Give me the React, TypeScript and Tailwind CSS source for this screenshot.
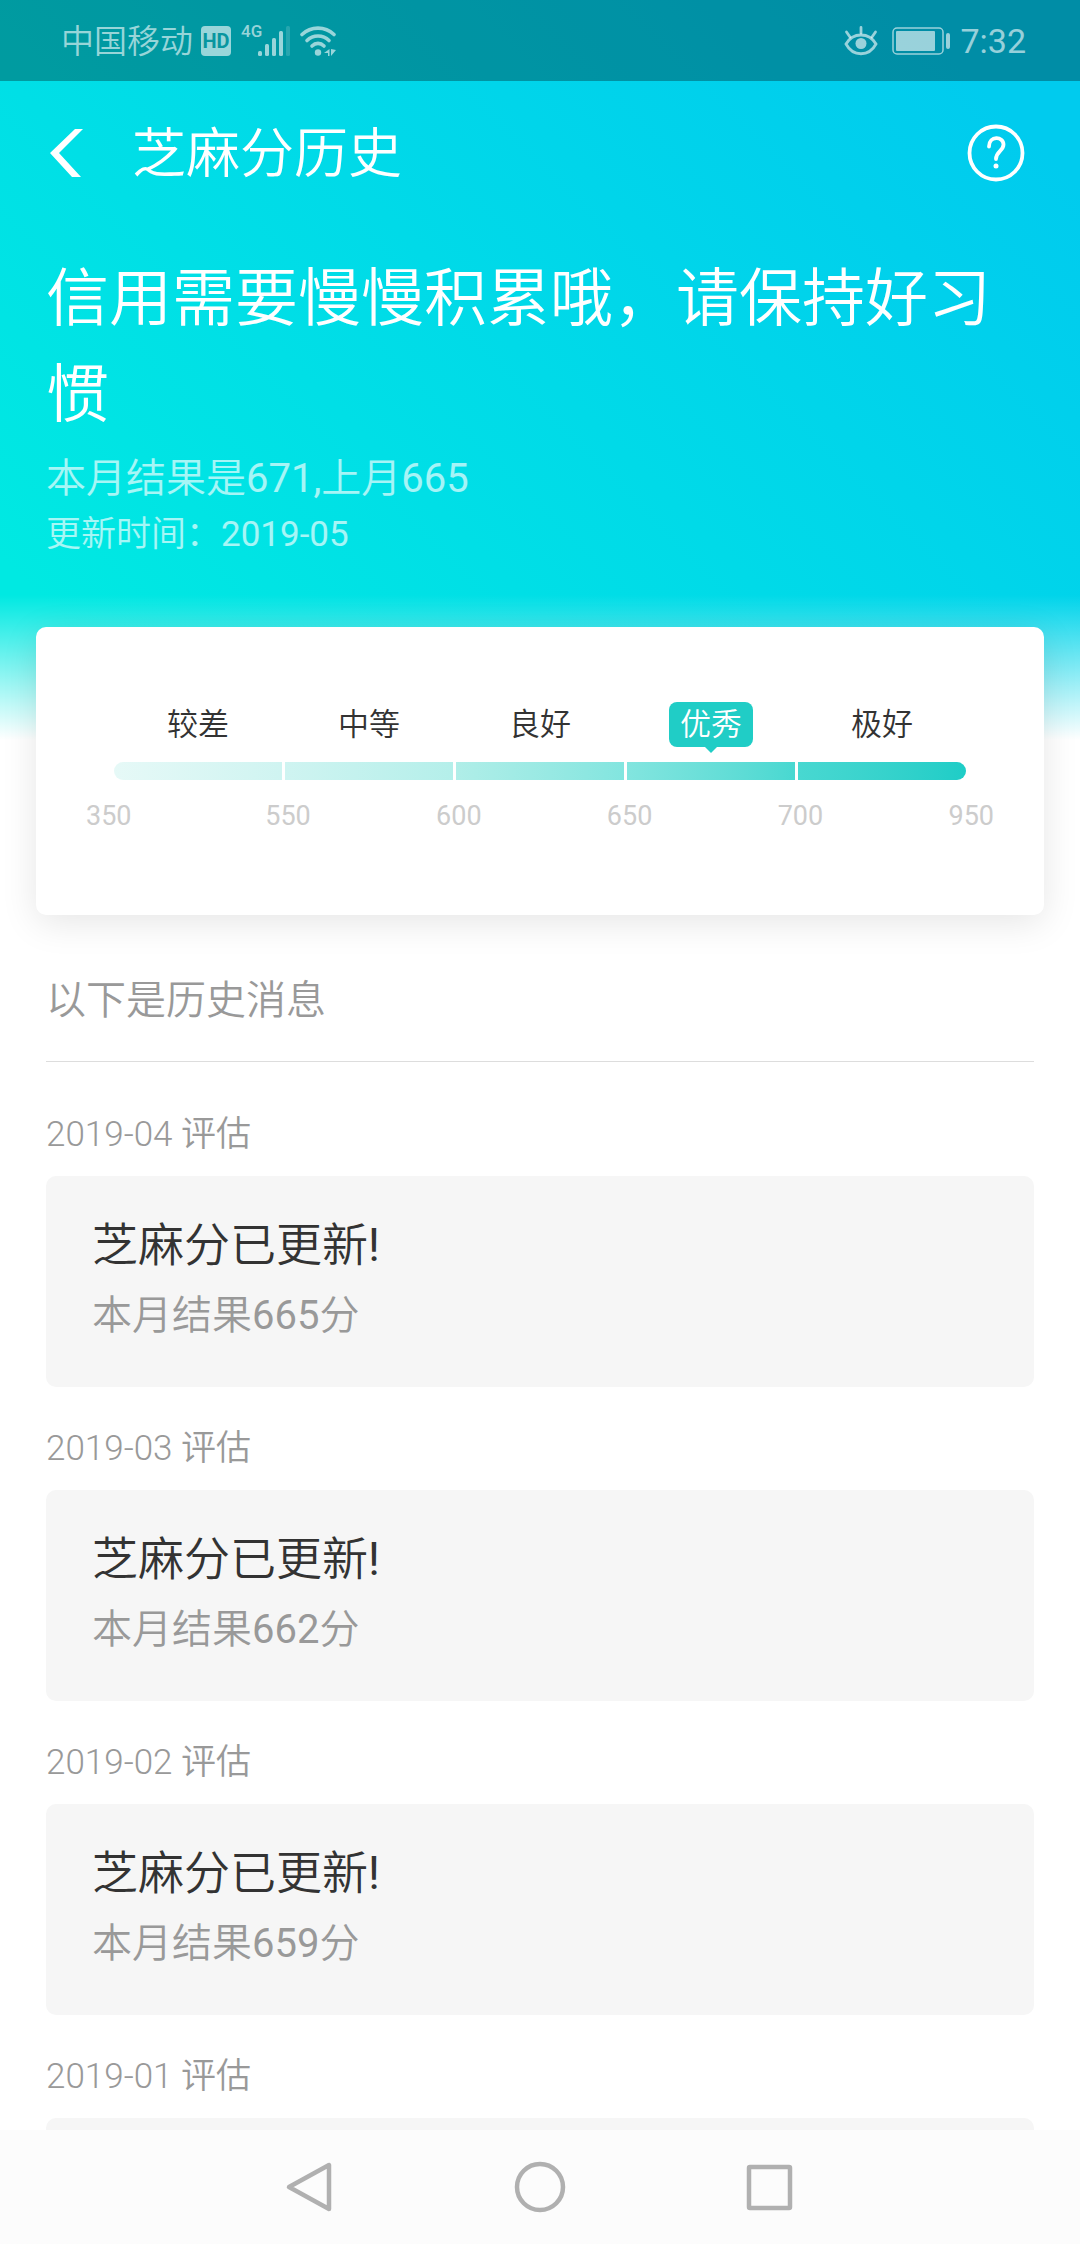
import type { ReactNode } from "react";

const LEVELS = [
  { name: "较差", fill: "bg-linear-to-r from-[#e6f9f7] to-[#cff4f1]", max: 550 },
  { name: "中等", fill: "bg-linear-to-r from-[#cff4f1] to-[#b4efea]", max: 600 },
  { name: "良好", fill: "bg-linear-to-r from-[#b0eee8] to-[#82e5df]", max: 650 },
  { name: "优秀", fill: "bg-linear-to-r from-[#82e5df] to-[#48d8d1]", max: 700 },
  { name: "极好", fill: "bg-linear-to-r from-[#48d8d1] to-[#1ecdc7]", max: 950 },
];

const CURRENT = "优秀";

const HISTORY: { month: string; score?: number }[] = [
  { month: "2019-04", score: 665 },
  { month: "2019-03", score: 662 },
  { month: "2019-02", score: 659 },
  { month: "2019-01" },
];

function StatusBar() {
  return (
    <div className="flex h-[81px] items-center justify-between bg-black/30 pr-[54px] pl-[61px] text-white/60">
      <div className="flex items-center">
        <span className="pt-[3px] text-[33px] leading-[40px]">中国移动</span>
        <span className="ml-[8px] flex h-[30px] w-[30px] items-center justify-center rounded-[4px] bg-white/60 font-[Roboto] text-[20px] leading-[30px] font-bold text-[#0896a0]">
          HD
        </span>
        <span className="ml-[10px] self-start pt-[2px] font-[Roboto] text-[17px] leading-[20px] font-medium">4G</span>
        <svg className="-ml-[4px] h-[30px] w-[33px]" viewBox="0 0 33 30" fill="currentColor" aria-hidden="true">
          <rect x="0" y="25" width="4" height="5" rx="1.5" />
          <rect x="7" y="18" width="4" height="12" rx="1.5" />
          <rect x="14" y="12" width="4" height="18" rx="1.5" />
          <rect x="21" y="5" width="4" height="25" rx="1.5" />
          <rect x="28" y="0" width="4" height="30" rx="1.5" opacity="0.25" />
        </svg>
        <svg className="ml-[9px] h-[30px] w-[36px]" viewBox="0 0 36 30" fill="none" stroke="currentColor" strokeWidth="3.6" strokeLinecap="round" aria-hidden="true">
          <path d="M2 8.5C11 0 25 0 34 8.5" />
          <path d="M7 14.5c6-6 16-6 22 0" />
          <path d="M12 20c3.5-3.5 8.5-3.5 12 0" />
          <circle cx="18" cy="26.5" r="3.2" fill="currentColor" stroke="none" />
          <path d="M29.5 23v7H28v-3h-4zM31 23v7l5-6z" fill="currentColor" stroke="none" />
        </svg>
      </div>
      <div className="flex items-center">
        <svg className="h-[30px] w-[34px]" viewBox="0 0 34 30" fill="none" stroke="currentColor" strokeWidth="2.8" strokeLinecap="round" aria-hidden="true">
          <path d="M2 18C9 6 25 6 32 18 25 31 9 31 2 18z" />
          <path d="M17 7V1.5M6 11 2.5 6M28 11l3.5-5" />
          <circle cx="17" cy="17.5" r="5.5" fill="currentColor" stroke="none" />
        </svg>
        <svg className="ml-[14px] h-[28px] w-[59px]" viewBox="0 0 59 28" fill="currentColor" aria-hidden="true">
          <rect x="1" y="1" width="50" height="26" rx="4" fill="none" stroke="currentColor" strokeWidth="1.5" />
          <rect x="4" y="4" width="39" height="20" rx="1" />
          <rect x="54" y="6" width="4" height="16" rx="2" />
        </svg>
        <span className="ml-[9px] font-[Roboto] text-[34px] leading-[40px] font-normal">7:32</span>
      </div>
    </div>
  );
}

function TopBar() {
  return (
    <header className="flex h-[143px] items-center pr-[55px] pl-[50px] text-white">
      <button type="button" aria-label="返回">
        <svg className="h-[48px] w-[33px]" viewBox="0 0 33 48" fill="currentColor" aria-hidden="true">
          <path d="M33 0H25L0 24 22 48H31L9 24z" />
        </svg>
      </button>
      <h1 className="ml-[49px] flex-1 pt-[4px] text-[54px] leading-[64px]">芝麻分历史</h1>
      <button type="button" aria-label="帮助">
        <svg className="h-[58px] w-[58px]" viewBox="0 0 58 58" fill="none" stroke="currentColor" strokeWidth="3.8" strokeLinecap="round" aria-hidden="true">
          <circle cx="29" cy="29" r="26.5" />
          <path d="M22 22.5C22 11.5 36.5 12 36.5 20.5 36.5 27 29 27.5 29 35" />
          <circle cx="29" cy="42" r="2.5" fill="currentColor" stroke="none" />
        </svg>
      </button>
    </header>
  );
}

function LevelCard() {
  return (
    <section className="relative mx-[36px] -mt-[113px] h-[288px] rounded-[10px] bg-white pt-[75px] shadow-[0_8px_36px_rgba(0,0,0,0.1)]">
      <div className="mx-[78px] flex gap-[3px]">
        {LEVELS.map((level) => (
          <div key={level.name} className="group flex flex-1 flex-col items-center">
            {level.name === CURRENT ? (
              <span className="relative flex h-[45px] items-center rounded-[8px] bg-[#20cdc6] px-[11px] pt-[2px] text-[31px] text-white">
                {level.name}
                <span className="absolute -bottom-[6px] left-1/2 -translate-x-1/2 border-x-6 border-t-6 border-x-transparent border-t-[#20cdc6]" />
              </span>
            ) : (
              <span className="flex h-[45px] items-center pt-[2px] text-[31px] text-[#333]">{level.name}</span>
            )}
            <div className={`mt-[15px] h-[18px] w-full group-first:rounded-l-full group-last:rounded-r-full ${level.fill}`} />
          </div>
        ))}
      </div>
      <div className="mx-[50px] mt-[18px] flex font-[Roboto] text-[27px] leading-[36px] font-normal text-[#ccc]">
        <span className="w-[54px]">350</span>
        {LEVELS.map((level) => (
          <span key={level.max} className="flex-1 text-right">
            {level.max}
          </span>
        ))}
      </div>
    </section>
  );
}

function HistoryItem({ month, score }: { month: string; score?: number }) {
  return (
    <li>
      <h3 className="text-[35px] leading-[42px] text-[#999]">{month} 评估</h3>
      <div className="mt-[20px] h-[211px] rounded-[10px] bg-[#f6f6f6] px-[46px] pt-[41px]">
        {score !== undefined && (
          <>
            <p className="text-[46px] leading-[56px] text-[#333]">
              芝麻分已更新<span className="font-normal">!</span>
            </p>
            <p className="mt-[15px] text-[40px] leading-[56px] text-[#999]">
              本月结果<span className="font-normal">{score}</span>分
            </p>
          </>
        )}
      </div>
    </li>
  );
}

function NavButton({ label, children }: { label: string; children: ReactNode }) {
  return (
    <button type="button" aria-label={label} className="flex flex-1 items-center justify-center">
      <svg className="h-[52px] w-[52px]" viewBox="0 0 52 52" fill="none" stroke="#b0b0b0" strokeWidth="4.5" strokeLinejoin="round" aria-hidden="true">
        {children}
      </svg>
    </button>
  );
}

export default function App() {
  return (
    <div className="flex h-screen flex-col bg-white font-[Roboto,'Noto_Sans_CJK_SC',sans-serif] font-[350]">
      <main className="min-h-0 flex-1 overflow-y-auto [scrollbar-width:none]">
        <div className="bg-[linear-gradient(to_top,white_0,transparent_145px),linear-gradient(45deg,#00e9e2_10%,#00cbee_90%)] pb-[184px]">
          <StatusBar />
          <TopBar />
          <div className="px-[46px] pt-[27px] text-white">
            <h2 className="text-[63px] leading-[96px]">信用需要慢慢积累哦，请保持好习惯</h2>
            <p className="mt-[8px] text-[40px] leading-[56px] text-white/65">
              本月结果是<span className="font-normal">671,</span>上月<span className="font-normal">665</span>
            </p>
            <p className="mt-[7px] text-[35px] leading-[42px] text-white/65">
              更新时间：<span className="font-normal">2019-05</span>
            </p>
          </div>
        </div>

        <LevelCard />

        <section className="px-[46px]">
          <h2 className="border-b border-[#ddd] pt-[58px] pb-[32px] text-[40px] leading-[56px] text-[#999]">以下是历史消息</h2>
          <ul className="flex flex-col gap-[41px] pt-[52px]">
            {HISTORY.map((item) => (
              <HistoryItem key={item.month} {...item} />
            ))}
          </ul>
        </section>
      </main>

      <nav className="flex h-[114px] shrink-0 bg-[#fcfcfc] px-[18%]">
        <NavButton label="返回">
          <path d="M45 4v44L5 26z" />
        </NavButton>
        <NavButton label="主屏幕">
          <circle cx="26" cy="26" r="23" />
        </NavButton>
        <NavButton label="最近任务">
          <rect x="5" y="6" width="41" height="41" rx="1" />
        </NavButton>
      </nav>
    </div>
  );
}
